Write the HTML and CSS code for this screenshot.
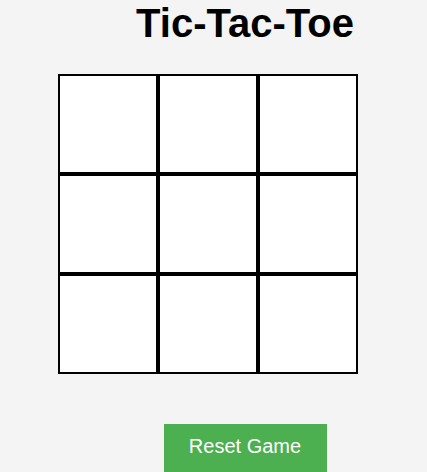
FILE: index.html
```html
<!DOCTYPE html>
<html lang="en">
<head>
<meta charset="utf-8">
<title>Tic-Tac-Toe</title>
<link rel="stylesheet" href="styles.css">
</head>
<body>
  <h1 class="title">Tic-Tac-Toe</h1>
  <div class="board">
    <div class="cell"></div>
    <div class="cell"></div>
    <div class="cell"></div>
    <div class="cell"></div>
    <div class="cell"></div>
    <div class="cell"></div>
    <div class="cell"></div>
    <div class="cell"></div>
    <div class="cell"></div>
  </div>
  <div class="actions">
    <button class="reset">Reset Game</button>
  </div>
</body>
</html>
```
FILE: styles.css
```css
html, body {
  margin: 0;
  padding: 0;
  background: #f4f4f4;
  font-family: "Liberation Sans", Arial, sans-serif;
  overflow: hidden;
}

.title {
  margin: 0 0 28px 63px;
  text-align: center;
  font-size: 40px;
  line-height: 46px;
  font-weight: bold;
  color: #000;
}

.board {
  display: grid;
  grid-template-columns: repeat(3, 100px);
  grid-template-rows: repeat(3, 100px);
  margin-left: 58px;
  width: 300px;
}

.cell {
  box-sizing: border-box;
  background: #fff;
  border: 2px solid #000;
}

.actions {
  display: flex;
  justify-content: center;
  margin: 50px 0 0 63px;
}

.reset {
  font-family: "Liberation Sans", Arial, sans-serif;
  font-size: 20px;
  line-height: 23px;
  padding: 11px 25px 20px;
  width: 163px;
  background: #4caf50;
  color: #fff;
  border: none;
  border-radius: 0;
}
```
